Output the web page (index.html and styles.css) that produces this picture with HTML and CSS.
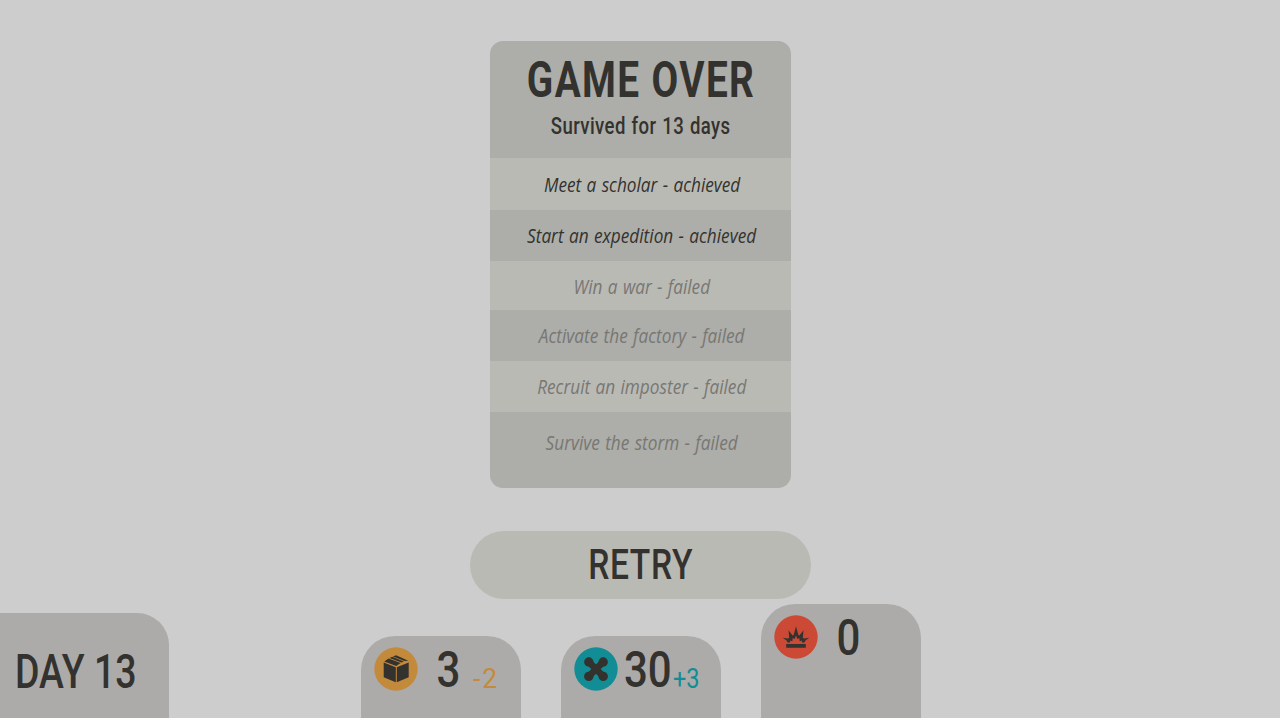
FILE: index.html
```html
<!DOCTYPE html>
<html lang="en">
<head>
    <meta charset="UTF-8">
    <meta name="viewport" content="width=device-width, initial-scale=1.0">
    <title>Game Over</title>
    <link rel="stylesheet" href="styles.css">
</head>
<body>
    <div class="screen">
        <div class="panel">
            <div class="panel-header">
                <h1><span class="title">GAME OVER</span></h1>
                <p><span class="subtitle">Survived for 13 days</span></p>
            </div>
            <ul class="goals">
                <li class="light"><span>Meet a scholar - achieved</span></li>
                <li><span>Start an expedition - achieved</span></li>
                <li class="light failed short"><span>Win a war - failed</span></li>
                <li class="failed"><span>Activate the factory - failed</span></li>
                <li class="light failed"><span>Recruit an imposter - failed</span></li>
                <li class="failed last"><span>Survive the storm - failed</span></li>
            </ul>
        </div>

        <button class="retry"><span>RETRY</span></button>

        <div class="hud">
            <div class="day"><span>DAY 13</span></div>
            <div class="card supplies">
                <svg class="icon" viewBox="0 0 44 44">
                    <circle cx="22" cy="22" r="21.7" fill="#c48a3c"/>
                    <path fill="#33322e" d="M9.7 15.4 21.8 20.2V35.2L9.7 30.2ZM34.7 15.4 22.8 20.2V35.2L34.7 30.2ZM10.2 14.4 14.6 11.4 26.6 16.1 22.2 19.1ZM15.6 10.9 18.2 9.7 29.8 14.4 27.4 15.6ZM18.9 9.4 22.2 8.3 34.2 13.8 30.6 14.1Z"/>
                </svg>
                <span class="count">3</span>
                <span class="delta">-2</span>
            </div>
            <div class="card people">
                <svg class="icon" viewBox="0 0 44 44">
                    <circle cx="22" cy="22" r="21.7" fill="#128d95"/>
                    <g fill="#33322e">
                        <circle cx="14.8" cy="15" r="4.7"/>
                        <circle cx="29.2" cy="15" r="4.7"/>
                        <circle cx="14.8" cy="29.4" r="4.7"/>
                        <circle cx="29.2" cy="29.4" r="4.7"/>
                    </g>
                    <path stroke="#33322e" stroke-width="6.6" d="M15 15.2 29 29.2M29 15.2 15 29.2"/>
                </svg>
                <span class="count">30</span>
                <span class="delta">+3</span>
            </div>
            <div class="card threat">
                <svg class="icon" viewBox="0 0 44 44">
                    <circle cx="22" cy="22" r="21.7" fill="#cc4a35"/>
                    <path fill="#33322e" d="M12.2 28.9H31.8V32.7H12.2ZM13.6 27.5 12.3 25.3 8.7 22.7 13.6 23.5 15.2 23.1 14.5 15.2 18.8 20.8 19.8 19.6 22 11.2 24.2 19.6 25.2 20.8 29.5 15.2 28.8 23.1 30.4 23.5 35.3 22.7 31.7 25.3 30.4 27.5H27.8L28 25.6 25.7 26.2 25.2 23 23.4 24.1 22 20.6 20.6 24.1 18.8 23 18.3 26.2 16 25.6 16.2 27.5Z"/>
                </svg>
                <span class="count">0</span>
            </div>
        </div>
    </div>
</body>
</html>
```
FILE: styles.css
```css
* {
    box-sizing: border-box;
}
body {
    margin: 0;
    background: #cdcdcd;
    font-family: Roboto, sans-serif;
    color: #33322e;
    overflow: hidden;
}
span {
    display: inline-block;
    white-space: nowrap;
}
.screen {
    display: flex;
    flex-direction: column;
    align-items: center;
    width: 1280px;
    height: 718px;
    padding-top: 41px;
}
.panel {
    width: 301px;
    height: 447px;
    margin-left: 1px;
    border-radius: 13px;
    background: #adada9;
    overflow: hidden;
}
.panel-header {
    height: 117px;
    padding-top: 14px;
    text-align: center;
}
h1, p {
    margin: 0;
    display: flex;
    justify-content: center;
}
h1 {
    font-size: 49.5px;
    line-height: 50px;
    font-weight: 700;
    letter-spacing: 1.8px;
    padding-left: 2px;
}
p {
    font-size: 23.5px;
    line-height: 28px;
    font-weight: 500;
    letter-spacing: 0.5px;
    word-spacing: 1px;
    margin-top: 7px;
}
.title {
    transform: scaleX(0.782);
}
.subtitle {
    transform: scaleX(0.79);
}
.goals {
    margin: 0;
    padding: 0;
    list-style: none;
    font-family: "Open Sans", sans-serif;
    font-size: 20.4px;
    font-style: italic;
    font-weight: 400;
    line-height: 28px;
    word-spacing: 1px;
}
.goals li {
    display: flex;
    justify-content: center;
    align-items: center;
    height: 51px;
    padding-left: 3px;
}
.goals .light {
    height: 51.5px;
    background: #babab5;
}
.goals .short {
    height: 49px;
    padding-top: 2px;
}
.goals .failed {
    color: #777773;
}
.goals .last {
    height: 77px;
    padding-bottom: 17px;
}
.goals span {
    transform: scaleX(0.845);
}
.retry {
    width: 341px;
    height: 68px;
    margin: 43px 0 5px 1px;
    border: none;
    border-radius: 34px;
    background: #babab4;
    color: inherit;
    font: 500 42px/68px Roboto, sans-serif;
    letter-spacing: 0.8px;
    padding: 0;
    cursor: pointer;
}
.retry span {
    transform: scaleX(0.8);
}
.hud {
    display: flex;
    align-items: flex-end;
    width: 100%;
    height: 114px;
}
.day {
    width: 169px;
    height: 105px;
    margin-right: 192px;
    padding: 31px 0 0 15px;
    border-top-right-radius: 32px;
    background: #acabaa;
    font-size: 48px;
    font-weight: 500;
    line-height: 56px;
}
.day span, .count, .delta {
    transform-origin: left;
}
.day span {
    transform: scaleX(0.78);
}
.card {
    display: flex;
    align-items: flex-start;
    width: 160px;
    height: 82px;
    margin-right: 40px;
    padding: 11px 0 0 13px;
    border-radius: 34px 34px 0 0;
    background: #acabaa;
}
.threat {
    height: 114px;
}
.icon {
    flex: none;
    width: 44px;
    height: 44px;
}
.count {
    width: 54px;
    padding-left: 22px;
    font-size: 50px;
    font-weight: 500;
    line-height: 46px;
    transform: scaleX(0.84);
}
.people .count {
    padding-left: 7px;
}
.delta {
    margin-top: 18px;
    margin-left: 1px;
    font-size: 28px;
    line-height: 28px;
    transform: scaleX(0.84);
}
.supplies .delta {
    color: #c48a3c;
    letter-spacing: 2px;
    transform: scaleX(0.94);
}
.people .delta {
    color: #128d95;
}
```
